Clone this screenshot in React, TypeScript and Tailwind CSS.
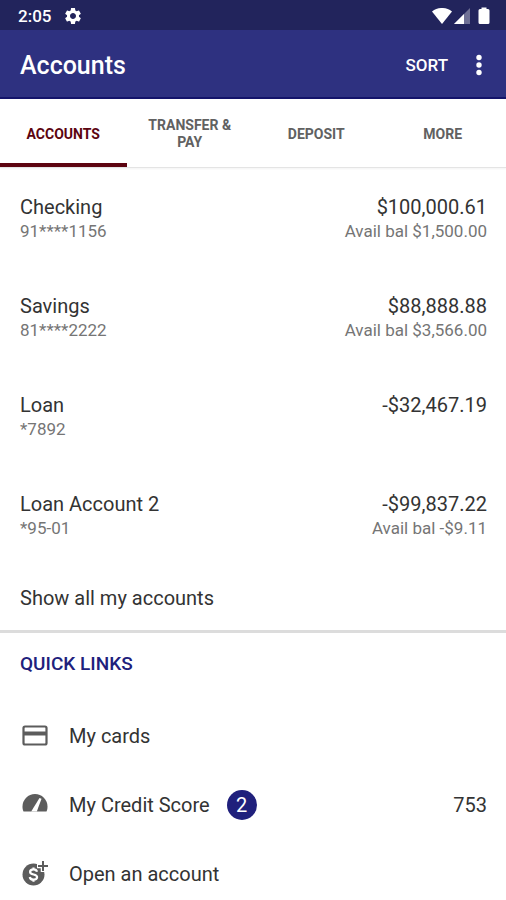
import type { ReactNode } from "react";

interface Account {
  name: string;
  number: string;
  balance: string;
  available?: string;
}

const accounts: Account[] = [
  { name: "Checking", number: "91****1156", balance: "$100,000.61", available: "Avail bal $1,500.00" },
  { name: "Savings", number: "81****2222", balance: "$88,888.88", available: "Avail bal $3,566.00" },
  { name: "Loan", number: "*7892", balance: "-$32,467.19" },
  { name: "Loan Account 2", number: "*95-01", balance: "-$99,837.22", available: "Avail bal -$9.11" },
];

const tabs = ["Accounts", "Transfer & Pay", "Deposit", "More"];

function StatusBar() {
  return (
    <div className="flex h-[30px] items-center justify-between bg-[#22245c] pt-0.5 pr-4 pl-[18px] text-white">
      <div className="flex items-center gap-3">
        <span className="text-[17px] leading-6 font-medium">2:05</span>
        <svg className="size-5" viewBox="0 0 24 24" fill="currentColor">
          <path d="M19.14 12.94c.04-.3.06-.61.06-.94 0-.32-.02-.64-.07-.94l2.03-1.58c.18-.14.23-.41.12-.61l-1.92-3.32c-.12-.22-.37-.29-.59-.22l-2.39.96c-.5-.38-1.03-.7-1.62-.94L14.4 2.81c-.04-.24-.24-.41-.48-.41h-3.84c-.24 0-.43.17-.47.41l-.36 2.54c-.59.24-1.13.57-1.62.94l-2.39-.96c-.22-.08-.47 0-.59.22L2.74 8.87c-.12.21-.08.47.12.61l2.03 1.58c-.05.3-.09.63-.09.94s.02.64.07.94l-2.03 1.58c-.18.14-.23.41-.12.61l1.92 3.32c.12.22.37.29.59.22l2.39-.96c.5.38 1.03.7 1.62.94l.36 2.54c.05.24.24.41.48.41h3.84c.24 0 .44-.17.47-.41l.36-2.54c.59-.24 1.13-.56 1.62-.94l2.39.96c.22.08.47 0 .59-.22l1.92-3.32c.12-.22.07-.47-.12-.61l-2.01-1.58zM12 15.6c-1.98 0-3.6-1.62-3.6-3.6s1.62-3.6 3.6-3.6 3.6 1.62 3.6 3.6-1.62 3.6-3.6 3.6z" />
        </svg>
      </div>
      <div className="flex items-center">
        <svg className="h-4 w-5" viewBox="0 0 20 16" fill="currentColor">
          <path d="M0 3.5C5.6-1.2 14.4-1.2 20 3.5L10 16z" />
        </svg>
        <svg className="ml-0.5 size-4" viewBox="0 0 16 16" fill="currentColor">
          <path d="M16 0v16H0z" opacity=".35" />
          <path d="M10 6v10H0z" />
        </svg>
        <svg className="ml-2 h-[18px] w-3" viewBox="0 0 12 18" fill="currentColor">
          <path d="M3.5 .5h5V2H10a1.5 1.5 0 0 1 1.5 1.5v12A1.5 1.5 0 0 1 10 17H2a1.5 1.5 0 0 1-1.5-1.5v-12A1.5 1.5 0 0 1 2 2h1.5z" />
        </svg>
      </div>
    </div>
  );
}

function AccountRow({ account }: { account: Account }) {
  return (
    <li className="flex h-[99px] justify-between pt-[27px] pr-[19px] pl-5">
      <div>
        <p className="text-xl leading-6 text-[#333]">{account.name}</p>
        <p className="text-[17px] leading-6 text-[#757575]">{account.number}</p>
      </div>
      <div className="text-right">
        <p className="text-xl leading-6 text-[#333]">{account.balance}</p>
        <p className="text-[17px] leading-6 text-[#757575]">{account.available}</p>
      </div>
    </li>
  );
}

interface QuickLinkProps {
  icon: ReactNode;
  label: string;
  badge?: string;
  value?: string;
}

function QuickLink({ icon, label, badge, value }: QuickLinkProps) {
  return (
    <li>
      <a href="#" className="flex h-[69px] items-center pr-[19px] pl-5 text-xl leading-6 text-[#333]">
        <span className="mr-[19px] text-[#5c5c5c]">{icon}</span>
        <span>{label}</span>
        {badge && (
          <span className="ml-[17px] flex size-[30px] items-center justify-center rounded-full bg-[#20207c] text-white">
            {badge}
          </span>
        )}
        {value && <span className="ml-auto">{value}</span>}
      </a>
    </li>
  );
}

function CardIcon() {
  return (
    <svg className="h-[30px] w-[30px]" viewBox="0 0 30 30" fill="none" stroke="currentColor">
      <rect x="3.5" y="5.5" width="23" height="18" rx="1.5" strokeWidth="2.2" />
      <path d="M3.5 12.5h23" strokeWidth="4" />
    </svg>
  );
}

function GaugeIcon() {
  return (
    <svg className="h-[30px] w-[30px]" viewBox="0 0 30 30">
      <path
        d="M3.5 21.5C2.7 19.8 2.5 18.2 2.5 16.5a12.5 12.5 0 0 1 25 0c0 1.700-.2 3.300-1 5z"
        fill="currentColor"
      />
      <path d="M19.5 8l2 .8-4.7 12.7h-5.6z" fill="#fff" />
    </svg>
  );
}

function OpenAccountIcon() {
  return (
    <svg className="h-[30px] w-[30px]" viewBox="0 0 30 30" fill="none">
      <circle cx="13.5" cy="15.5" r="11" fill="currentColor" />
      <path d="M23 0v13M17 7h13" stroke="#fff" strokeWidth="4.5" />
      <path d="M23 2v10M18 7h10" stroke="currentColor" strokeWidth="2" />
      <path
        d="M17 12.8c-.3-1.6-1.5-2.5-3.5-2.5s-3.4 1-3.4 2.6c0 3.6 7 1.6 7 5.2 0 1.7-1.5 2.6-3.6 2.6s-3.5-1-3.7-2.7M13.5 8.5v2M13.5 20.5v2.2"
        stroke="#fff"
        strokeWidth="2.2"
      />
    </svg>
  );
}

export default function App() {
  return (
    <div className="min-h-screen bg-white font-['Roboto',sans-serif]">
      <StatusBar />

      {/* App bar */}
      <header className="flex h-[69px] items-center border-b-2 border-[#14146a] bg-[#2e3180] pt-1 pr-4 pl-5 text-white">
        <h1 className="text-[25px] font-medium">Accounts</h1>
        <button className="ml-auto text-[17px] font-medium">SORT</button>
        <button aria-label="More options" className="ml-5">
          <svg className="h-6 w-[22px]" viewBox="0 0 22 24" fill="currentColor">
            <circle cx="11" cy="3.5" r="2.7" />
            <circle cx="11" cy="11" r="2.7" />
            <circle cx="11" cy="18.5" r="2.7" />
          </svg>
        </button>
      </header>

      {/* Tabs */}
      <nav className="grid h-[69px] grid-cols-4 border-b border-[#e4e4e4] shadow-xs">
        {tabs.map((tab, i) => (
          <button
            key={tab}
            className={
              i === 0
                ? "border-b-4 border-[#5c0410] px-4 pt-1.5 text-sm leading-[17px] font-bold text-[#5c0410] uppercase"
                : "border-b-4 border-transparent px-4 pt-1.5 text-sm leading-[17px] font-bold text-[#616161] uppercase"
            }
          >
            {tab}
          </button>
        ))}
      </nav>

      {/* Accounts */}
      <ul>
        {accounts.map((account) => (
          <AccountRow key={account.name} account={account} />
        ))}
      </ul>
      <button className="block h-[66px] w-full px-5 pt-0.5 text-left text-xl leading-6 text-[#333]">
        Show all my accounts
      </button>

      {/* Quick links */}
      <section className="border-t-3 border-[#dcdcdc]">
        <h2 className="px-5 pt-[19px] pb-[25px] text-[19px] leading-6 font-medium text-[#20207c]">QUICK LINKS</h2>
        <ul>
          <QuickLink icon={<CardIcon />} label="My cards" />
          <QuickLink icon={<GaugeIcon />} label="My Credit Score" badge="2" value="753" />
          <QuickLink icon={<OpenAccountIcon />} label="Open an account" />
        </ul>
      </section>
    </div>
  );
}
